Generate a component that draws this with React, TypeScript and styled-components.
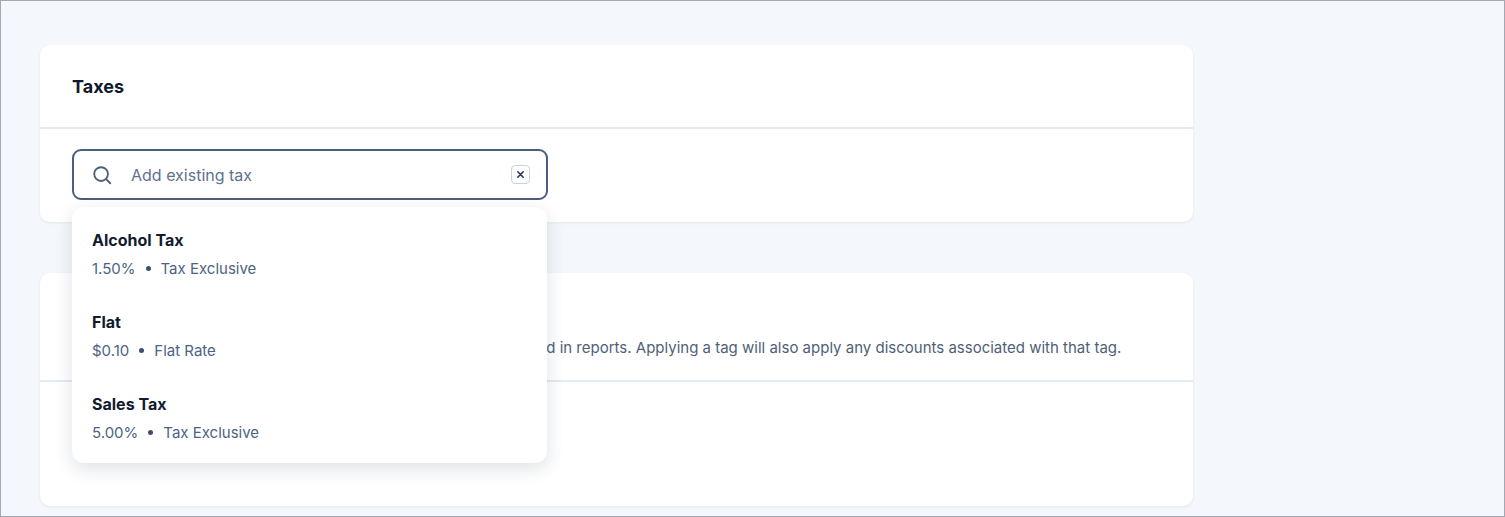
import React from 'react';
import styled, { createGlobalStyle } from 'styled-components';

const GlobalStyle = createGlobalStyle`
  html, body { margin: 0; padding: 0; }
  body {
    font-family: 'Inter', 'Liberation Sans', sans-serif;
    background: #f4f7fb;
  }
`;

const Frame = styled.div`
  box-sizing: border-box;
  width: 1505px;
  height: 517px;
  border: 1px solid #a3a9b0;
  background: #f4f7fb;
  padding: 44px 0 0 39px;
  overflow: hidden;
`;

const Column = styled.div`
  width: 1153px;
  display: flex;
  flex-direction: column;
  gap: 51px;
`;

const Card = styled.section<{ $raised?: boolean }>`
  position: relative;
  z-index: ${p => (p.$raised ? 2 : 1)};
  background: #fff;
  border-radius: 10px;
  box-shadow: 0 1px 3px rgba(30, 50, 80, 0.08);
`;

const CardHeader = styled.div<{ $h: number }>`
  box-sizing: border-box;
  height: ${p => p.$h}px;
  padding: 31px 32px 0;
  border-bottom: 2px solid #e3ebf3;
`;

const Title = styled.h2`
  margin: 0;
  font-size: 18px;
  font-weight: 700;
  color: #101a2c;
`;

const Description = styled.p`
  margin: 13px 0 0;
  font-size: 15px;
  color: #4f5f78;
  white-space: nowrap;
`;

const CardBody = styled.div<{ $h: number }>`
  position: relative;
  height: ${p => p.$h}px;
  padding: 20px 32px 0;
  box-sizing: border-box;
`;

const SearchBox = styled.div`
  box-sizing: border-box;
  width: 476px;
  height: 51px;
  border: 2px solid #4b5e7a;
  border-radius: 9px;
  display: flex;
  align-items: center;
  padding: 0 16px 0 17px;
  gap: 18px;
`;

const Placeholder = styled.span`
  flex: 1;
  font-size: 16px;
  color: #5d7190;
`;

const ClearButton = styled.span`
  width: 17px;
  height: 17px;
  border: 1px solid #c9d3df;
  border-radius: 4px;
  display: flex;
  align-items: center;
  justify-content: center;
  color: #2b3a52;
`;

const Dropdown = styled.ul`
  position: absolute;
  left: 32px;
  top: 78px;
  width: 475px;
  height: 256px;
  margin: 0;
  padding: 23px 20px 0;
  box-sizing: border-box;
  list-style: none;
  background: #fff;
  border-radius: 12px;
  box-shadow: 0 6px 18px rgba(30, 50, 80, 0.14);
  z-index: 10;
`;

const Option = styled.li`
  height: 82px;
`;

const OptionName = styled.div`
  font-size: 16px;
  font-weight: 700;
  color: #111b2d;
`;

const OptionMeta = styled.div`
  margin-top: 9px;
  font-size: 15px;
  color: #4d6383;
  display: flex;
  align-items: center;
  gap: 10px;
`;

const Dot = styled.span`
  width: 5px;
  height: 5px;
  border-radius: 50%;
  background: #3c4f6c;
`;

const taxes = [
  { name: 'Alcohol Tax', amount: '1.50%', type: 'Tax Exclusive' },
  { name: 'Flat', amount: '$0.10', type: 'Flat Rate' },
  { name: 'Sales Tax', amount: '5.00%', type: 'Tax Exclusive' },
];

export default function App() {
  return (
    <>
      <GlobalStyle />
      <Frame>
        <Column>
          <Card $raised>
            <CardHeader $h={84}>
              <Title>Taxes</Title>
            </CardHeader>
            <CardBody $h={93}>
              <SearchBox>
                <svg width="22" height="22" viewBox="0 0 24 24" fill="none" stroke="#4b5e7a" strokeWidth="2" strokeLinecap="round">
                  <circle cx="11" cy="11" r="7.5" />
                  <path d="M16.5 16.5L21 21" />
                </svg>
                <Placeholder>Add existing tax</Placeholder>
                <ClearButton>
                  <svg width="9" height="9" viewBox="0 0 10 10" stroke="currentColor" strokeWidth="1.8" strokeLinecap="round">
                    <path d="M2 2l6 6M8 2l-6 6" />
                  </svg>
                </ClearButton>
              </SearchBox>
              <Dropdown>
                {taxes.map(t => (
                  <Option key={t.name}>
                    <OptionName>{t.name}</OptionName>
                    <OptionMeta>
                      {t.amount}
                      <Dot />
                      {t.type}
                    </OptionMeta>
                  </Option>
                ))}
              </Dropdown>
            </CardBody>
          </Card>
          <Card>
            <CardHeader $h={109}>
              <Title>Tags</Title>
              <Description>
                Tags help you group, filter and organize the items on your menu and in reports. Applying a tag will also apply any discounts associated with that tag.
              </Description>
            </CardHeader>
            <CardBody $h={124} />
          </Card>
        </Column>
      </Frame>
    </>
  );
}
